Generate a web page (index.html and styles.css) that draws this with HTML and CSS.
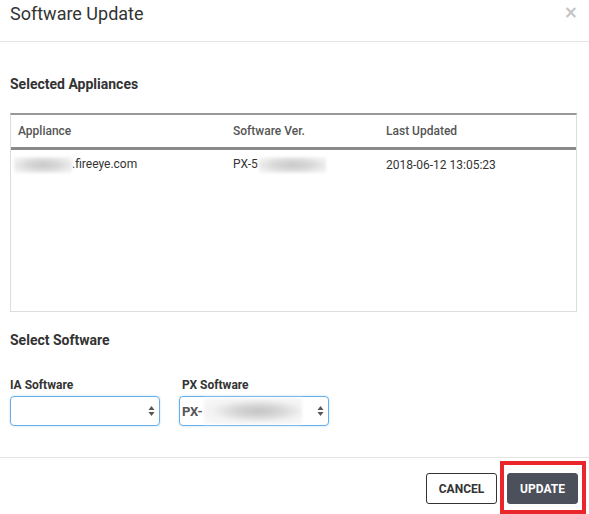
FILE: index.html
```html
<!DOCTYPE html>
<html>
<head>
<meta charset="utf-8">
<link rel="stylesheet" href="styles.css">
</head>
<body>
<div class="modal">
  <div class="modal-header">
    <h1 class="title">Software Update</h1>
    <span class="close">&#215;</span>
  </div>
  <div class="modal-body">
    <h2 class="section-title first">Selected Appliances</h2>
    <div class="table-box">
      <table class="grid">
        <colgroup><col class="c1"><col class="c2"><col class="c3"></colgroup>
        <thead>
          <tr><th>Appliance</th><th>Software Ver.</th><th>Last Updated</th></tr>
        </thead>
        <tbody>
          <tr>
            <td><span class="blur b1"></span>.fireeye.com</td>
            <td>PX-5<span class="blur b2"></span></td>
            <td>2018-06-12 13:05:23</td>
          </tr>
        </tbody>
      </table>
    </div>
    <h2 class="section-title second">Select Software</h2>
    <div class="fields">
      <div class="field">
        <label class="field-label">IA Software</label>
        <div class="select"><span class="val"></span><span class="arrows"><svg width="7" height="12" viewBox="0 0 7 12"><path d="M3.5 1 L6.5 5 L0.5 5 Z M3.5 11 L6.5 7 L0.5 7 Z" fill="#555"/></svg></span></div>
      </div>
      <div class="field">
        <label class="field-label px">PX Software</label>
        <div class="select"><span class="val px-val">PX-<span class="blur b3"></span></span><span class="arrows"><svg width="7" height="12" viewBox="0 0 7 12"><path d="M3.5 1 L6.5 5 L0.5 5 Z M3.5 11 L6.5 7 L0.5 7 Z" fill="#555"/></svg></span></div>
      </div>
    </div>
  </div>
  <div class="modal-footer">
    <button class="btn btn-cancel">CANCEL</button>
    <span class="highlight-wrap">
      <button class="btn btn-update">UPDATE</button>
      <span class="highlight"></span>
    </span>
  </div>
</div>
</body>
</html>
```

FILE: styles.css
```css
* { box-sizing: border-box; }
html, body { margin: 0; padding: 0; background: #fff; }
body {
  font-family: Roboto, "Liberation Sans", Arial, sans-serif;
  color: #333;
  width: 589px;
  height: 514px;
  overflow: hidden;
}
.modal { width: 589px; }
.modal-header {
  height: 42px;
  border-bottom: 1px solid #e5e5e5;
  display: flex;
  justify-content: space-between;
  align-items: flex-start;
  padding: 3px 10px 0 10px;
}
.title {
  margin: 0;
  font-size: 18px;
  font-weight: 400;
  line-height: 22px;
  color: #333;
}
.close {
  font-family: "DejaVu Sans", sans-serif;
  font-size: 17px;
  line-height: 14px;
  color: #c4c4c4;
  font-weight: 700;
  margin-right: 1px;
  margin-top: 2px;
}
.modal-body { padding: 0 12px 0 10px; }
.section-title {
  margin: 0;
  font-size: 14px;
  font-weight: 700;
  line-height: 16px;
  color: #333;
}
.section-title.first { padding-top: 34px; }
.section-title.second { padding-top: 20px; }
.table-box {
  margin-top: 21px;
  height: 199px;
  border: 1px solid #ddd;
  border-top: 2px solid #999;
}
.grid {
  width: 100%;
  border-collapse: collapse;
  table-layout: fixed;
  font-size: 12px;
}
.c1 { width: 215px; }
.c2 { width: 153px; }
.grid th {
  text-align: left;
  font-weight: 500;
  color: #555;
  height: 33px;
  padding: 0 7px;
  border-bottom: 3px solid #8a8a8a;
}
.grid td {
  padding: 1px 7px 0 7px;
  height: 32px;
  color: #333;
  white-space: nowrap;
  vertical-align: middle;
}
.blur {
  display: inline-block;
  vertical-align: middle;
  height: 16px;
  background: radial-gradient(ellipse at center, #c9c9c9 0%, #d8d8d8 40%, #efefef 75%, #f7f7f7 100%);
  filter: blur(1.5px);
}
.b1 { width: 58px; margin-left: -4px; }
.b2 { width: 67px; margin-left: 1px; }
.b3 { width: 98px; height: 26px; margin-left: 1px; background: radial-gradient(ellipse at 55% 50%, #c4c4c4 0%, #d6d6d6 30%, #f2f2f2 60%, #fafafa 100%); }
.fields {
  margin-top: 30px;
  display: flex;
  gap: 19px;
}
.field { width: 150px; display: flex; flex-direction: column; }
.field-label {
  font-size: 12px;
  font-weight: 700;
  line-height: 14px;
  color: #333;
  margin-bottom: 4px;
}
.field-label.px { padding-left: 3px; }
.select {
  height: 30px;
  border: 1px solid #66afe9;
  border-radius: 4px;
  box-shadow: 0 0 2px rgba(102,175,233,0.5);
  display: flex;
  align-items: center;
  justify-content: space-between;
  padding: 0 4px 0 2px;
}
.val { font-size: 13px; font-weight: 700; color: #555; display: flex; align-items: center; }
.arrows { display: flex; align-items: center; }
.modal-footer {
  margin-top: 31px;
  border-top: 1px solid #e5e5e5;
  display: flex;
  justify-content: flex-end;
  align-items: center;
  gap: 10px;
  padding: 15px 11px 0 0;
}
.btn {
  width: 71px;
  height: 31px;
  border-radius: 3px;
  font-family: Roboto, "Liberation Sans", Arial, sans-serif;
  font-size: 12px;
  font-weight: 700;
  padding: 0;
  cursor: pointer;
}
.btn-cancel {
  background: #fff;
  border: 1px solid #333;
  color: #333;
}
.btn-update {
  background: #4b505b;
  border: 1px solid #4b505b;
  color: #fff;
  display: block;
}
.highlight-wrap { position: relative; display: block; }
.highlight {
  position: absolute;
  top: -12px;
  bottom: -10px;
  left: -7px;
  right: -8px;
  border: 4px solid #e8262c;
  pointer-events: none;
}
```
